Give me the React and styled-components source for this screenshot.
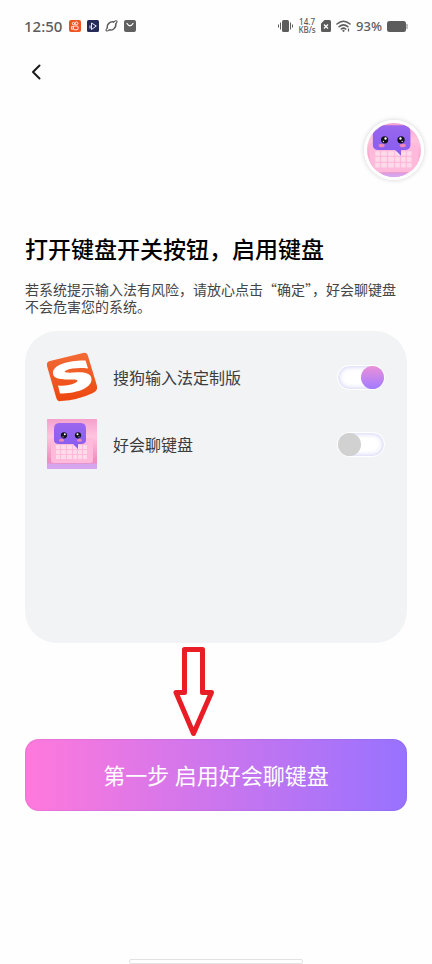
import React, { useState } from "react";
import styled, { createGlobalStyle } from "styled-components";

const GlobalStyle = createGlobalStyle`
  *, *::before, *::after { box-sizing: border-box; }
  body {
    margin: 0;
    background: #fefefe;
    color: #000;
    font-family: "Noto Sans", "Noto Sans CJK SC", sans-serif;
  }
`;

const Page = styled.div`
  min-height: 100vh;
  display: flex;
  flex-direction: column;
`;

const StatusBar = styled.header`
  display: flex;
  align-items: center;
  justify-content: space-between;
  height: 52px;
  padding: 0 24px;
  color: #5c5c5c;
`;

const StatusGroup = styled.div`
  display: flex;
  align-items: center;
  gap: ${(p) => p.$gap}px;
`;

const Clock = styled.time`
  font-size: 15px;
  line-height: 20px;
  font-weight: 500;
  margin-right: 1px;
`;

const Speed = styled.span`
  width: 18px;
  font-size: 8px;
  line-height: 8px;
  font-weight: 500;
  text-align: center;
`;

const Percent = styled.span`
  font-size: 13px;
  line-height: 20px;
  font-weight: 500;
`;

const Nav = styled.nav`
  display: flex;
  height: 40px;
  padding: 0 24px;
`;

const BackButton = styled.button`
  display: grid;
  place-items: center;
  width: 24px;
  height: 40px;
  padding: 0;
  border: 0;
  background: none;
  cursor: pointer;
`;

const AvatarRow = styled.div`
  display: flex;
  justify-content: flex-end;
  padding: 28px 8px 0;
`;

const Avatar = styled.div`
  width: 60px;
  height: 60px;
  border: 3px solid #fff;
  border-radius: 50%;
  overflow: hidden;
  box-shadow: 0 0 5px rgba(0, 0, 0, 0.18);
  svg { display: block; width: 100%; height: 100%; }
`;

const Main = styled.main`
  display: flex;
  flex-direction: column;
  padding: 53px 25px 0;
`;

const Title = styled.h1`
  margin: 0;
  font-size: 23px;
  line-height: 32px;
  font-weight: 500;
`;

const Description = styled.p`
  margin: 16px 0 0;
  color: #444;
  font-family: "Noto Sans CJK SC", sans-serif;
  font-size: 14px;
  line-height: 17px;
`;

const Panel = styled.ul`
  display: flex;
  flex-direction: column;
  gap: 17px;
  min-height: 312px;
  margin: 16px 0 0;
  padding: 21px 22px;
  border-radius: 32px;
  background: #f1f3f5;
  list-style: none;
`;

const KeyboardRow = styled.li`
  display: flex;
  align-items: center;
  gap: 16px;
  height: 50px;
  > svg { flex: none; }
`;

const KeyboardLabel = styled.label`
  flex: 1;
  padding-top: 2px;
  color: #3c3c3e;
  font-size: 16px;
  line-height: 24px;
`;

const Switch = styled.input`
  appearance: none;
  display: flex;
  align-items: center;
  justify-content: ${(p) => (p.checked ? "flex-end" : "flex-start")};
  width: 48px;
  height: 25px;
  margin: 0;
  padding: 0;
  border: 1px solid #fff;
  border-radius: 13px;
  background: #fff;
  box-shadow: inset 0 0 5px 1px #d3d3f8;
  cursor: pointer;

  &::before {
    content: "";
    width: 23px;
    height: 23px;
    border-radius: 50%;
    background: ${(p) => (p.checked ? "linear-gradient(#ea91d8, #a27bff)" : "#d1d1d2")};
  }
`;

const ArrowRow = styled.div`
  display: flex;
  justify-content: center;
  height: 96px;
  padding: 4px 45px 0 0;
  svg { flex: none; display: block; }
`;

const StartButton = styled.button`
  height: 72px;
  padding: 0 16px;
  border: 0;
  border-radius: 14px;
  background: linear-gradient(90deg, #ff79dc, #9872ff);
  box-shadow: inset 0 0 1px 1px rgba(110, 80, 160, 0.12);
  color: #fff;
  font: inherit;
  font-size: 22px;
  line-height: 32px;
  cursor: pointer;
`;

const HomeBar = styled.div`
  width: 174px;
  height: 5px;
  margin: auto auto 0;
  border: 1px solid #e2e2e2;
  border-radius: 2px;
  background: #fff;
`;

function ChatKeyboardArt({ id, round }) {
  return (
    <svg width="50" height="50" viewBox={round ? "2 2 46 46" : "0 0 50 50"} aria-hidden="true">
      <defs>
        <linearGradient id={`${id}-bg`} x1="0" y1="0" x2="0" y2="1">
          <stop offset="0" stopColor="#f3a0cd" />
          <stop offset=".35" stopColor="#ffc4df" />
          <stop offset=".83" stopColor="#f08dbd" />
          <stop offset="1" stopColor="#d2a4f0" />
        </linearGradient>
        <linearGradient id={`${id}-bubble`} x1="0" y1="0" x2="0" y2="1">
          <stop offset="0" stopColor="#9a67ee" />
          <stop offset="1" stopColor="#875cf1" />
        </linearGradient>
      </defs>
      <path d="M0 0h50v50H0z" fill={`url(#${id}-bg)`} />
      <path d="M0 45h50v5H0z" fill="#d6a5ee" />
      <rect x="4" y="19" width="42" height="25" rx="3" fill="#ffb9da" />
      <g fill="#ffdbea">
        {[26, 31, 36].map((y) =>
          [9, 14, 20, 26, 31, 36].map((x) => (
            <rect key={`${x}-${y}`} x={x} y={y} width={x === 14 || x === 20 ? 5 : 4} height="4" rx=".6" />
          ))
        )}
      </g>
      <path
        d="M12 4h22q5 0 5 6v11q0 4-5 4h-3v5l-5-5H12q-5 0-5-4V10q0-6 5-6z"
        fill={`url(#${id}-bubble)`}
      />
      <g>
        <circle cx="17" cy="16.300" r="3.100" fill="#11101c" />
        <circle cx="31" cy="16.300" r="3.100" fill="#11101c" />
        <circle cx="17.800" cy="15.200" r="1" fill="#fff" />
        <circle cx="30.500" cy="15.200" r="1" fill="#fff" />
        <circle cx="16" cy="17.800" r=".6" fill="#d9d0ff" />
        <circle cx="32" cy="17.800" r=".6" fill="#d9d0ff" />
        <ellipse cx="14.500" cy="21.200" rx="2.600" ry="1.500" fill="#ef86b8" />
        <ellipse cx="32.500" cy="21.200" rx="2.600" ry="1.500" fill="#ef86b8" />
      </g>
    </svg>
  );
}

function SogouIcon() {
  return (
    <svg width="50" height="50" viewBox="0 0 50 50" aria-hidden="true">
      <defs>
        <linearGradient id="sogou" x1="0" y1="0" x2="0" y2="1">
          <stop offset="0" stopColor="#f26b36" />
          <stop offset="1" stopColor="#ed4710" />
        </linearGradient>
      </defs>
      <path
        d="M3 9L36 1Q40 0 41 4L50 34Q51 39 46 41Q31 48 14 49Q10 50 9 45L0 14Q-1 10 3 9z"
        fill="url(#sogou)"
      />
      <path
        d="M38.500 8.500C24 8 7 12 6 20C5 28 17 27.500 26 27.500C31 27.500 32 29 28 31C23 33.500 17 34 11 33.500L13 41.500C28 41.500 43.500 37 44.500 28C45 20.500 36 20 27 20.500C18 21 16 20 19 18.500C24 16 33 15.500 41 16.500z"
        fill="#fff"
      />
    </svg>
  );
}

function VideoAppIcon() {
  return (
    <svg width="12" height="12" viewBox="0 0 12 12" aria-hidden="true">
      <rect width="12" height="12" rx="2" fill="#ee5420" />
      <g fill="none" stroke="#fff" strokeWidth=".9">
        <circle cx="4.500" cy="3.600" r="1.200" />
        <circle cx="7.500" cy="3.300" r="1.400" />
        <rect x="4.500" y="6" width="4.500" height="3.800" rx="1" />
        <path d="M4.500 7L2.600 6.500v2.800l1.900-.5" />
      </g>
    </svg>
  );
}

function PlayAppIcon() {
  return (
    <svg width="12" height="12" viewBox="0 0 12 12" aria-hidden="true">
      <rect width="12" height="12" rx="1.500" fill="#252b59" />
      <path d="M4.500 3v6.500L9.300 6zM3 5.500v3" fill="none" stroke="#e5e6ff" strokeWidth="1" />
    </svg>
  );
}

function PlanetIcon() {
  return (
    <svg width="13" height="12" viewBox="0 0 13 12" aria-hidden="true">
      <g fill="none" stroke="#5c5c5c" strokeLinecap="round">
        <path d="M2.200 8C1.500 4.500 5 1.200 8.600 2M10.700 4C11.500 7.800 7.500 10.800 4.200 9.900" strokeWidth="1.500" />
        <path d="M2.200 8C-.5 11 2 11.800 4.200 9.900M8.600 2C11.500-.1 13.500.7 10.700 4" strokeWidth="1.100" />
      </g>
    </svg>
  );
}

function BagIcon() {
  return (
    <svg width="12" height="12" viewBox="0 0 12 12" aria-hidden="true">
      <rect width="12" height="12" rx="2" fill="#606060" />
      <path d="M3 3.500q3 4.500 6 0" fill="none" stroke="#fff" strokeWidth="1.300" strokeLinecap="round" />
    </svg>
  );
}

function VibrateIcon() {
  return (
    <svg width="15" height="12" viewBox="0 0 15 12" aria-hidden="true">
      <rect x="4" y="0" width="7" height="12" rx="1.500" fill="#5c5c5c" />
      <path d="M2.500 2.500v7M.5 4.500v3M12.500 2.500v7M14.500 4.500v3" stroke="#5c5c5c" />
    </svg>
  );
}

function NoSimIcon() {
  return (
    <svg width="10" height="12" viewBox="0 0 10 12" aria-hidden="true">
      <path d="M3.500 0H8.500Q10 0 10 1.500v9Q10 12 8.500 12h-7Q0 12 0 10.500V3.500z" fill="#5c5c5c" />
      <path d="M3 4.500l4 4m0-4l-4 4" stroke="#fff" strokeWidth="1.300" />
    </svg>
  );
}

function WifiIcon() {
  return (
    <svg width="15" height="12" viewBox="0 0 15 12" aria-hidden="true">
      <g fill="none" stroke="#5c5c5c" strokeWidth="1.600" strokeLinecap="round">
        <path d="M1 4Q7.500-1.500 14 4M3.200 6.700Q7.500 3 11.800 6.700M5.300 9Q7.500 7.200 9.700 9" />
      </g>
      <circle cx="7.500" cy="10.800" r="1.100" fill="#5c5c5c" />
      <path d="M12.500 8.500v3" stroke="#5c5c5c" strokeWidth="1.200" />
    </svg>
  );
}

function BatteryIcon() {
  return (
    <svg width="21" height="11" viewBox="0 0 21 11" aria-hidden="true">
      <rect width="19" height="11" rx="2.500" fill="#5c5c5c" />
      <path d="M20 3.500v4" stroke="#aaa" strokeWidth="1.500" strokeLinecap="round" />
    </svg>
  );
}

function ArrowDown() {
  return (
    <svg width="41" height="92" viewBox="0 0 41 92" aria-hidden="true">
      <path
        d="M11.500 2.500h18v43h9L20.500 86.500L3 45.500h8.500z"
        fill="#fff"
        stroke="#e91d25"
        strokeWidth="5"
        strokeLinejoin="round"
      />
    </svg>
  );
}

export default function App() {
  const [sogou, setSogou] = useState(true);
  const [chat, setChat] = useState(false);

  return (
    <Page lang="zh-CN">
      <GlobalStyle />
      <StatusBar>
        <StatusGroup $gap={6}>
          <Clock>12:50</Clock>
          <VideoAppIcon />
          <PlayAppIcon />
          <PlanetIcon />
          <BagIcon />
        </StatusGroup>
        <StatusGroup $gap={5}>
          <VibrateIcon />
          <Speed>14.7 KB/s</Speed>
          <NoSimIcon />
          <WifiIcon />
          <Percent>93%</Percent>
          <BatteryIcon />
        </StatusGroup>
      </StatusBar>
      <Nav>
        <BackButton aria-label="返回">
          <svg width="12" height="18" viewBox="0 0 12 18" aria-hidden="true">
            <path d="M9.500 2.500L3 9l6.500 6.500" fill="none" stroke="#1c1c1c" strokeWidth="2" strokeLinecap="round" strokeLinejoin="round" />
          </svg>
        </BackButton>
      </Nav>
      <AvatarRow>
        <Avatar>
          <ChatKeyboardArt id="avatar" round />
        </Avatar>
      </AvatarRow>
      <Main>
        <Title>打开键盘开关按钮，启用键盘</Title>
        <Description>若系统提示输入法有风险，请放心点击“确定”，好会聊键盘不会危害您的系统。</Description>
        <Panel>
          <KeyboardRow>
            <SogouIcon />
            <KeyboardLabel htmlFor="sogou-switch">搜狗输入法定制版</KeyboardLabel>
            <Switch
              id="sogou-switch"
              type="checkbox"
              role="switch"
              checked={sogou}
              onChange={(e) => setSogou(e.target.checked)}
            />
          </KeyboardRow>
          <KeyboardRow>
            <ChatKeyboardArt id="row" />
            <KeyboardLabel htmlFor="chat-switch">好会聊键盘</KeyboardLabel>
            <Switch
              id="chat-switch"
              type="checkbox"
              role="switch"
              checked={chat}
              onChange={(e) => setChat(e.target.checked)}
            />
          </KeyboardRow>
        </Panel>
        <ArrowRow>
          <ArrowDown />
        </ArrowRow>
        <StartButton type="button">第一步 启用好会聊键盘</StartButton>
      </Main>
      <HomeBar />
    </Page>
  );
}
